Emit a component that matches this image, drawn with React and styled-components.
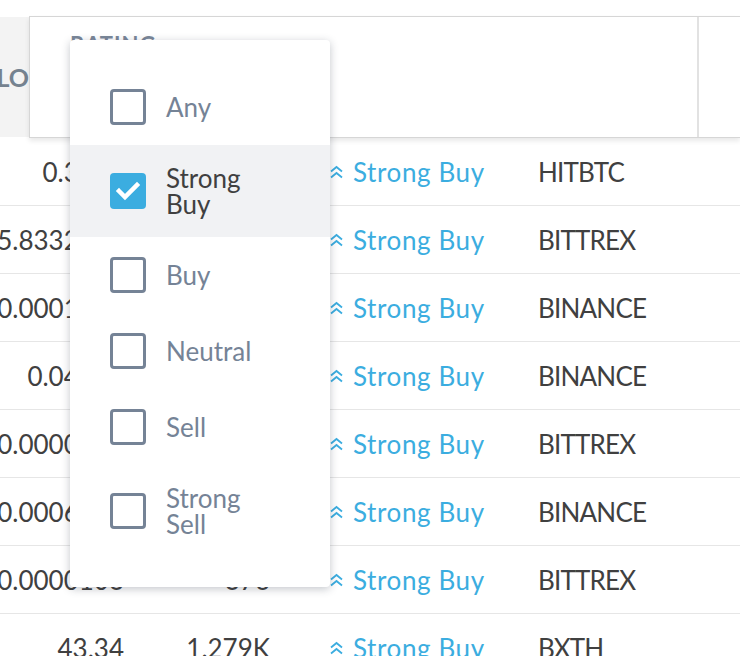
import React from "react";
import styled, { createGlobalStyle } from "styled-components";

const GlobalStyle = createGlobalStyle`
  html, body {
    margin: 0;
    padding: 0;
    background: #ffffff;
    overflow: hidden;
  }
  body {
    font-family: Lato, "Open Sans", "DejaVu Sans", sans-serif;
    color: #404040;
  }
`;

const Screener = styled.div`
  position: relative;
  width: 740px;
  height: 656px;
  overflow: hidden;
  padding-top: 16px;
  box-sizing: border-box;
`;

const HeaderRow = styled.div`
  display: flex;
  height: 122px;
`;

const SortedHead = styled.div`
  width: 29px;
  margin: 1px 0;
  background: #f3f3f3;
  display: flex;
  align-items: center;
  justify-content: flex-end;
  overflow: hidden;
  font-size: 25px;
  font-weight: 700;
  color: #75828f;
`;

const FilterBox = styled.div`
  flex: 1;
  display: flex;
  background: #ffffff;
  border: 1px solid #d6d6d6;
  border-right: none;
  box-shadow: 0 3px 5px rgba(0, 0, 0, 0.09);
  position: relative;
  z-index: 1;
`;

const HeadCell = styled.div`
  width: ${({ width }) => width || "auto"};
  flex: ${({ width }) => (width ? "none" : "1")};
  padding: 14px 0 0 40px;
  box-sizing: border-box;
  border-left: ${({ divided }) => (divided ? "2px solid #e2e2e2" : "none")};
  font-size: 22px;
  font-weight: 700;
  letter-spacing: 1px;
  color: #7a8799;
`;

const Row = styled.div`
  display: grid;
  grid-template-columns: 124px 146px 268px 1fr;
  height: 68px;
  box-sizing: border-box;
  border-bottom: 1px solid #e6e6e6;
  align-items: center;
  font-size: 26px;
`;

const NumCell = styled.div`
  display: flex;
  justify-content: flex-end;
  white-space: nowrap;
  color: #404040;
`;

const RatingCell = styled.div`
  display: flex;
  align-items: center;
  gap: 10px;
  padding-left: 60px;
  color: #3bade0;
  letter-spacing: 0.6px;
  white-space: nowrap;
`;

const ExchangeCell = styled.div`
  color: #404040;
  letter-spacing: -0.8px;
  white-space: nowrap;
`;

const Dropdown = styled.div`
  position: absolute;
  left: 70px;
  top: 40px;
  width: 260px;
  padding: 29px 0 30px;
  background: #ffffff;
  border-radius: 4px;
  box-shadow: 0 2px 8px rgba(40, 50, 70, 0.28);
  z-index: 2;
`;

const Option = styled.div`
  display: flex;
  align-items: center;
  gap: 20px;
  min-height: 76px;
  padding: 20px 40px;
  box-sizing: border-box;
  background: ${({ checked }) => (checked ? "#f1f2f4" : "transparent")};
`;

const Box = styled.div`
  flex: none;
  width: 36px;
  height: 36px;
  box-sizing: border-box;
  border-radius: 4px;
  border: ${({ checked }) => (checked ? "none" : "3px solid #758396")};
  background: ${({ checked }) => (checked ? "#3bade0" : "#ffffff")};
  display: flex;
  align-items: center;
  justify-content: center;
`;

const Label = styled.span`
  max-width: 110px;
  font-size: 26px;
  line-height: 26px;
  color: ${({ checked }) => (checked ? "#404040" : "#758396")};
`;

const ChevronsUp = () => (
  <svg width="13" height="14" viewBox="0 0 13 14" fill="none">
    <polyline points="1,6.5 6.5,2 12,6.5" stroke="#3bade0" strokeWidth="1.8" />
    <polyline points="1,12.5 6.5,8 12,12.5" stroke="#3bade0" strokeWidth="1.8" />
  </svg>
);

const Check = () => (
  <svg width="36" height="36" viewBox="0 0 36 36" fill="none">
    <polyline
      points="9,18 15,24 27,12"
      stroke="#ffffff"
      strokeWidth="4.5"
      strokeLinecap="square"
    />
  </svg>
);

const rows = [
  { price: "0.3845", volume: "2.114K", exchange: "HITBTC" },
  { price: "5.8332000", volume: "318", exchange: "BITTREX" },
  { price: "0.0001820", volume: "74.21K", exchange: "BINANCE" },
  { price: "0.04580", volume: "1.92K", exchange: "BINANCE" },
  { price: "0.0000324", volume: "5.4K", exchange: "BITTREX" },
  { price: "0.0006214", volume: "911", exchange: "BINANCE" },
  { price: "0.0000103", volume: "376", exchange: "BITTREX" },
  { price: "43.34", volume: "1.279K", exchange: "BXTH" },
];

const options = [
  { label: "Any" },
  { label: "Strong Buy", checked: true },
  { label: "Buy" },
  { label: "Neutral" },
  { label: "Sell" },
  { label: "Strong Sell" },
];

const App = () => {
  return (
    <Screener>
      <GlobalStyle />
      <HeaderRow>
        <SortedHead>LO</SortedHead>
        <FilterBox>
          <HeadCell width="667px">RATING</HeadCell>
          <HeadCell divided />
        </FilterBox>
      </HeaderRow>

      {rows.map((row, i) => (
        <Row key={i}>
          <NumCell>{row.price}</NumCell>
          <NumCell>{row.volume}</NumCell>
          <RatingCell>
            <ChevronsUp />
            Strong Buy
          </RatingCell>
          <ExchangeCell>{row.exchange}</ExchangeCell>
        </Row>
      ))}

      <Dropdown>
        {options.map((opt) => (
          <Option key={opt.label} checked={opt.checked}>
            <Box checked={opt.checked}>{opt.checked && <Check />}</Box>
            <Label checked={opt.checked}>{opt.label}</Label>
          </Option>
        ))}
      </Dropdown>
    </Screener>
  );
};

export default App;
